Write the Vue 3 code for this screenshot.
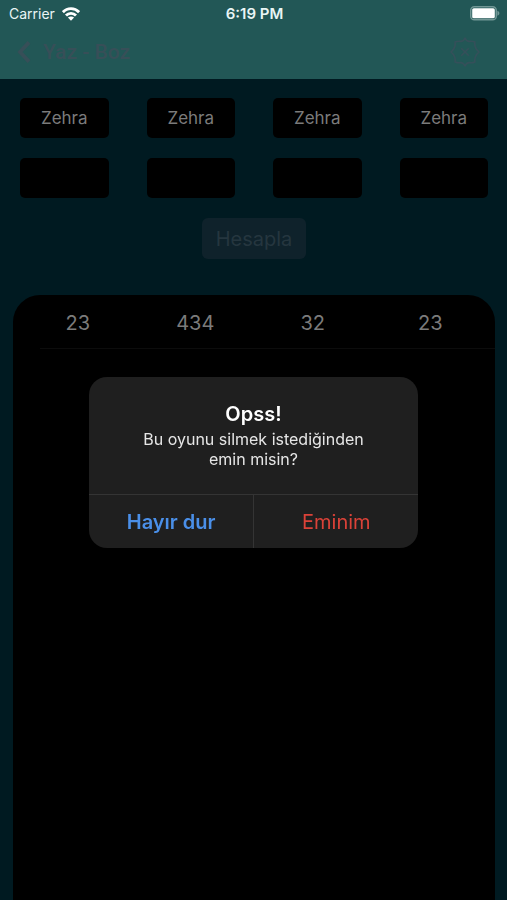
<script setup>
import { ref } from 'vue'

const players = ref(['Zehra', 'Zehra', 'Zehra', 'Zehra'])
const scores = ref(['', '', '', ''])
const rounds = ref([[23, 434, 32, 23]])
</script>

<template>
  <div class="screen">
    <header class="top">
      <div class="status">
        <div class="carrier">
          <span>Carrier</span>
          <svg class="wifi" viewBox="0 0 18 14" aria-hidden="true">
            <g fill="none" stroke="currentColor" stroke-width="2.8">
              <path d="M0.9 5.2C5.3 0.5 12.7 0.5 17.1 5.2" />
              <path d="M4 8.5C6.7 5.6 11.3 5.6 14 8.5" />
            </g>
            <path d="M9 13.8L5.9 10.6C7.6 9 10.4 9 12.1 10.6Z" fill="currentColor" />
          </svg>
        </div>
        <time class="clock">6:19 PM</time>
        <svg class="battery" viewBox="0 0 30 15" aria-hidden="true">
          <rect x="0.75" y="0.75" width="25.5" height="13" rx="3.6" fill="none" stroke="#719795" stroke-width="1.5" />
          <rect x="2.2" y="2.2" width="22.6" height="10.1" rx="1.6" fill="#fff" />
          <path d="M27.4 4.8C30 5.8 30 8.8 27.4 9.8Z" fill="#719795" />
        </svg>
      </div>
      <nav class="nav">
        <button class="back" type="button">
          <svg class="chevron" viewBox="0 0 14 22" aria-hidden="true">
            <path d="M12 1.4L3 11L12 20.6" fill="none" stroke="currentColor" stroke-width="3.8" />
          </svg>
          <span>Yaz - Boz</span>
        </button>
        <button class="reset" type="button" aria-label="Sil">
          <svg viewBox="0 0 30 30" aria-hidden="true">
            <g fill="none" stroke="currentColor" stroke-width="1.6" stroke-linejoin="round">
              <path d="M15 1Q16.500 4.500 19.400 4.400Q22.500 4 24.900 5.100Q24.500 8.500 25.600 10.600Q26.500 13 29 15Q26.500 17 25.600 19.400Q24.500 21.500 24.900 24.900Q22.500 26 19.400 25.600Q16.500 25.500 15 29Q13.500 25.500 10.600 25.600Q7.500 26 5.100 24.900Q5.500 21.500 4.400 19.400Q3.500 17 1 15Q3.500 13 4.400 10.600Q5.500 8.500 5.100 5.100Q7.500 4 10.600 4.400Q13.500 4.500 15 1Z" />
              <path d="M11.200 11.200L18.800 18.800M18.800 11.200L11.200 18.800" />
            </g>
          </svg>
        </button>
      </nav>
    </header>

    <main class="content">
      <form class="entry" @submit.prevent>
        <div class="fields">
          <input v-for="(_, i) in players" :key="'p' + i" v-model="players[i]" class="field" type="text" :aria-label="'Oyuncu ' + (i + 1)" />
          <input v-for="(_, i) in scores" :key="'s' + i" v-model="scores[i]" class="field" type="text" :aria-label="'Puan ' + (i + 1)" />
        </div>
        <button class="calculate" type="submit">Hesapla</button>
      </form>

      <section class="panel">
        <table class="rounds">
          <tbody>
            <tr v-for="(round, r) in rounds" :key="r">
              <td v-for="(score, c) in round" :key="c">{{ score }}</td>
            </tr>
          </tbody>
        </table>
        <div class="separator"></div>
      </section>
    </main>

    <div class="overlay">
      <div class="alert" role="alertdialog" aria-labelledby="alert-title" aria-describedby="alert-message">
        <div class="alert-body">
          <h2 id="alert-title">Opss!</h2>
          <p id="alert-message">Bu oyunu silmek istediğinden emin misin?</p>
        </div>
        <div class="actions">
          <button class="action cancel" type="button">Hayır dur</button>
          <button class="action destroy" type="button">Eminim</button>
        </div>
      </div>
    </div>
  </div>
</template>

<style>
body {
  margin: 0;
  background: #001a21;
}
</style>

<style scoped>
.screen {
  display: flex;
  flex-direction: column;
  min-height: 100vh;
  background: #001a21;
  font-family: Inter, "Liberation Sans", sans-serif;
}

button,
input {
  box-sizing: border-box;
  margin: 0;
  padding: 0;
  border: 0;
  background: none;
  font: inherit;
}

svg {
  display: block;
}

.top {
  background: #225756;
  padding-bottom: 8px;
}

.status {
  display: grid;
  grid-template-columns: 1fr auto 1fr;
  align-items: center;
  height: 27px;
  padding: 0 7px 0 9px;
  color: #e9f5f5;
  font-size: 14px;
}

.carrier {
  display: flex;
  align-items: center;
  gap: 7px;
}

.wifi {
  width: 18px;
  height: 14px;
  color: #fff;
}

.clock {
  font-size: 15px;
  font-weight: 600;
}

.battery {
  width: 30px;
  height: 15px;
  justify-self: end;
}

.nav {
  display: flex;
  align-items: center;
  justify-content: space-between;
  height: 44px;
  padding: 6px 27px 0 17px;
  box-sizing: border-box;
  color: #374f58;
}

.back {
  display: flex;
  align-items: center;
  gap: 12px;
  color: inherit;
  font-family: Roboto, Inter, sans-serif;
  font-size: 21px;
  font-weight: 500;
}

.chevron {
  width: 14px;
  height: 22px;
}

.reset {
  width: 30px;
  height: 30px;
  color: #35505a;
}

.content {
  display: flex;
  flex: 1;
  flex-direction: column;
}

.entry {
  display: flex;
  flex-direction: column;
  align-items: center;
  gap: 20px;
  padding: 19px 19px 36px 20px;
}

.fields {
  display: grid;
  grid-template-columns: repeat(4, minmax(0, 1fr));
  gap: 20px 38px;
  width: 100%;
}

.field {
  width: 100%;
  height: 40px;
  border-radius: 5px;
  background: #000;
  color: #7b7b7b;
  font-size: 17px;
  text-align: center;
}

.calculate {
  height: 41px;
  padding: 0 14px;
  border-radius: 6px;
  background: #0f222b;
  color: #25363f;
  font-size: 20px;
}

.panel {
  flex: 1;
  margin: 0 12px 0 13px;
  border-radius: 27px 27px 0 0;
  background: #000;
}

.rounds {
  width: 100%;
  padding: 0 6px;
  border-spacing: 0;
  table-layout: fixed;
  color: #7b7b7b;
  font-size: 20px;
}

.rounds td {
  height: 51px;
  padding: 2px 0 0;
  text-align: center;
}

.separator {
  height: 1px;
  margin-left: 27px;
  background: #0c0c0c;
}

.overlay {
  position: fixed;
  inset: 0;
  display: flex;
  align-items: center;
  justify-content: center;
  padding-top: 25px;
}

.alert {
  width: 65%;
  min-width: 280px;
  max-width: 360px;
  overflow: hidden;
  border-radius: 18px;
  background: #1f1f1f;
  text-align: center;
}

.alert-body {
  padding: 24px 48px 25px;
}

.alert h2 {
  margin: 0 0 2px;
  color: #fff;
  font-size: 20px;
  font-weight: 600;
  line-height: 26px;
}

.alert p {
  margin: 0;
  color: #e6e6e6;
  font-size: 16px;
  line-height: 20px;
}

.actions {
  display: grid;
  grid-template-columns: 1fr 1fr;
  border-top: 1px solid #343434;
}

.action {
  height: 53px;
  font-size: 20px;
}

.cancel {
  color: #4a8fe8;
  font-weight: 600;
}

.destroy {
  border-left: 1px solid #343434;
  color: #db4238;
}
</style>
